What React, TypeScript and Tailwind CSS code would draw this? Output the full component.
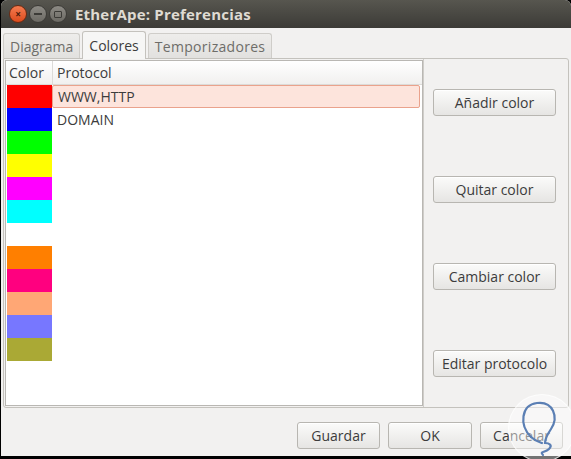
import React from 'react';

const font = { fontFamily: '"Open Sans", "DejaVu Sans", sans-serif' };

const swatches = [
  '#ff0000', '#0000ff', '#00ff00', '#ffff00', '#ff00ff', '#00ffff',
  '#ffffff', '#ff7f00', '#ff007f', '#ffa775', '#7777ff', '#aaa935',
];

const protocols: Record<number, string> = { 0: 'WWW,HTTP', 1: 'DOMAIN' };

const GtkButton: React.FC<{ label: string; className?: string }> = ({ label, className = '' }) => (
  <button
    className={`h-[27px] rounded-[3px] border border-[#b8b6b1] bg-gradient-to-b from-[#fbfbfa] to-[#e6e5e3] text-[14px] text-[#3c3c3c] shadow-[inset_0_1px_0_#ffffff] ${className}`}
  >
    {label}
  </button>
);

const App: React.FC = () => {
  return (
    <div className="relative w-[571px] h-[459px] bg-black overflow-hidden" style={font}>
      <div className="w-[570px] h-[456px] ml-px flex flex-col bg-[#f2f1f0] rounded-t-[6px] overflow-hidden">
        {/* title bar */}
        <div className="h-[28px] shrink-0 flex items-center bg-gradient-to-b from-[#57564f] to-[#3c3b37] pl-[8px]">
          <div className="flex items-center gap-[2px]">
            <span className="w-[18px] h-[18px] rounded-full bg-gradient-to-b from-[#f47b4f] to-[#dc4a1a] border border-[#6b2a12] flex items-center justify-center text-[10px] font-bold text-[#4a1b0a] leading-none">×</span>
            <span className="w-[18px] h-[18px] rounded-full bg-gradient-to-b from-[#8d8b85] to-[#6c6a64] border border-[#3c3b37] flex items-center justify-center">
              <span className="w-[8px] h-[2px] bg-[#3c3b37]" />
            </span>
            <span className="w-[18px] h-[18px] rounded-full bg-gradient-to-b from-[#8d8b85] to-[#6c6a64] border border-[#3c3b37] flex items-center justify-center">
              <span className="w-[8px] h-[7px] border border-[#3c3b37] rounded-[1px]" />
            </span>
          </div>
          <span className="ml-[8px] text-[15px] font-bold text-[#dfdbd2] tracking-[0.2px]">EtherApe: Preferencias</span>
        </div>

        {/* tabs */}
        <div className="h-[30px] shrink-0 flex items-end pl-[2px] gap-[2px]">
          <div className="h-[25px] px-[6px] flex items-center rounded-t-[3px] border border-b-0 border-[#cfcdc9] bg-gradient-to-b from-[#eeedeb] to-[#e2e1df] text-[14px] text-[#6e6d69]">Diagrama</div>
          <div className="h-[28px] px-[6px] flex items-center rounded-t-[3px] border border-b-0 border-[#c4c2bd] bg-[#f6f6f5] text-[14px] text-[#3c3c3c] relative top-px">Colores</div>
          <div className="h-[25px] px-[6px] flex items-center rounded-t-[3px] border border-b-0 border-[#cfcdc9] bg-gradient-to-b from-[#eeedeb] to-[#e2e1df] text-[14px] text-[#6e6d69] tracking-[0.3px]">Temporizadores</div>
        </div>

        {/* notebook page */}
        <div className="mx-[2px] h-[350px] border border-[#c4c2bd] rounded-b-[3px] rounded-tr-[3px] bg-[#f2f1f0] flex">
          {/* list */}
          <div className="w-[418px] m-px mr-0 border border-[#b9b7b3] bg-white flex flex-col">
            <div className="h-[24px] flex items-center border-b border-[#dcdbd8] bg-gradient-to-b from-[#ffffff] to-[#f1f0ef] text-[14px] text-[#3c3c3c]">
              <div className="w-[47px] h-full flex items-center pl-[3px] border-r border-[#dcdbd8]">Color</div>
              <div className="pl-[4px]">Protocol</div>
            </div>
            <div className="flex flex-col">
              {swatches.map((c, i) => (
                <div key={i} className="h-[23px] flex pl-px">
                  <div className="w-[45px] h-full" style={{ backgroundColor: c }} />
                  <div
                    className={`flex-1 flex items-center pl-[5px] mr-[2px] text-[14px] text-[#3c3c3c] ${
                      i === 0 ? 'bg-[#fde4dc] border border-[#eaa28c] rounded-[2px]' : ''
                    }`}
                  >
                    {protocols[i] ?? ''}
                  </div>
                </div>
              ))}
            </div>
          </div>

          {/* right buttons */}
          <div className="flex-1 border-l border-[#cfcdc9] pl-[9px] pt-[30px] flex flex-col gap-[60px]">
            <GtkButton label="Añadir color" className="w-[123px]" />
            <GtkButton label="Quitar color" className="w-[123px]" />
            <GtkButton label="Cambiar color" className="w-[123px]" />
            <GtkButton label="Editar protocolo" className="w-[123px]" />
          </div>
        </div>

        {/* bottom buttons */}
        <div className="flex justify-end gap-[8px] pt-[14px] pr-[8px]">
          <GtkButton label="Guardar" className="w-[83px]" />
          <GtkButton label="OK" className="w-[84px]" />
          <GtkButton label="Cancelar" className="w-[83px]" />
        </div>
      </div>

      {/* watermark */}
      <div className="absolute left-[508px] top-[394px] w-[68px] h-[68px] rounded-full bg-white/45 border border-white/70">
        <svg width="68" height="68" viewBox="0 0 68 68" className="absolute inset-0">
          <path
            d="M22 42 C10 30 12 10 28 8 C44 6 50 22 42 34 C38 40 36 44 36 48 C40 48 44 50 40 54 C36 58 30 56 34 60"
            fill="none"
            stroke="#5b7fb4"
            strokeWidth="2.2"
            strokeLinecap="round"
          />
          <path d="M22 42 C26 46 30 47 33 48" fill="none" stroke="#5b7fb4" strokeWidth="2.2" strokeLinecap="round" />
        </svg>
      </div>
    </div>
  );
};

export default App;
